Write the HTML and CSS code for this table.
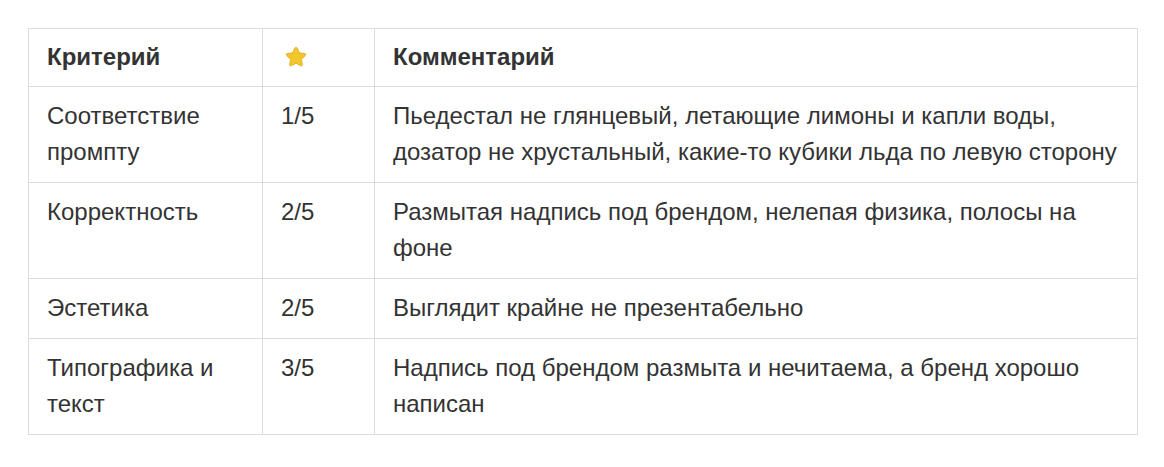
FILE: index.html
```
<!DOCTYPE html>
<html lang="ru">
<head>
<meta charset="utf-8">
<link rel="stylesheet" href="styles.css">
</head>
<body>
<table class="grid">
  <colgroup>
    <col class="c1"><col class="c2"><col class="c3">
  </colgroup>
  <thead>
    <tr>
      <th>Критерий</th>
      <th><svg class="star" viewBox="0 0 24 24" width="24" height="24"><path d="M12 2.2c.5 0 .9.3 1.1.7l2.4 4.9 5.3.8c.9.1 1.3 1.2.6 1.9l-3.9 3.8.9 5.3c.2.9-.8 1.6-1.6 1.2L12 18.3l-4.8 2.5c-.8.4-1.8-.3-1.6-1.2l.9-5.3-3.9-3.8c-.7-.7-.3-1.8.6-1.9l5.3-.8 2.4-4.9c.2-.4.6-.7 1.1-.7z" fill="#f2c62d" stroke="#e0a81c" stroke-width="0.8" stroke-linejoin="round"/></svg></th>
      <th>Комментарий</th>
    </tr>
  </thead>
  <tbody>
    <tr>
      <td>Соответствие промпту</td>
      <td>1/5</td>
      <td>Пьедестал не глянцевый, летающие лимоны и капли воды, дозатор не хрустальный, какие-то кубики льда по левую сторону</td>
    </tr>
    <tr>
      <td>Корректность</td>
      <td>2/5</td>
      <td>Размытая надпись под брендом, нелепая физика, полосы на фоне</td>
    </tr>
    <tr>
      <td>Эстетика</td>
      <td>2/5</td>
      <td>Выглядит крайне не презентабельно</td>
    </tr>
    <tr>
      <td>Типографика и текст</td>
      <td>3/5</td>
      <td>Надпись под брендом размыта и нечитаема, а бренд хорошо написан</td>
    </tr>
  </tbody>
</table>
</body>
</html>
```

FILE: styles.css
```
html, body {
  margin: 0;
  padding: 0;
  background: #ffffff;
}
body {
  padding: 28px;
  font-family: "Liberation Sans", Arial, sans-serif;
  font-size: 24px;
  line-height: 36px;
  color: #333333;
}
.grid {
  border-collapse: collapse;
  table-layout: fixed;
  width: 1110px;
}
.c1 { width: 234px; }
.c2 { width: 112px; }
.c3 { width: auto; }
.grid th, .grid td {
  border: 1px solid #dcdcdc;
  padding: 11px 18px 12px;
  text-align: left;
  vertical-align: top;
}
.grid th {
  font-weight: bold;
  padding: 10px 18px 11px;
}
.star {
  display: block;
  margin: 6px 0 0 3px;
}
```
